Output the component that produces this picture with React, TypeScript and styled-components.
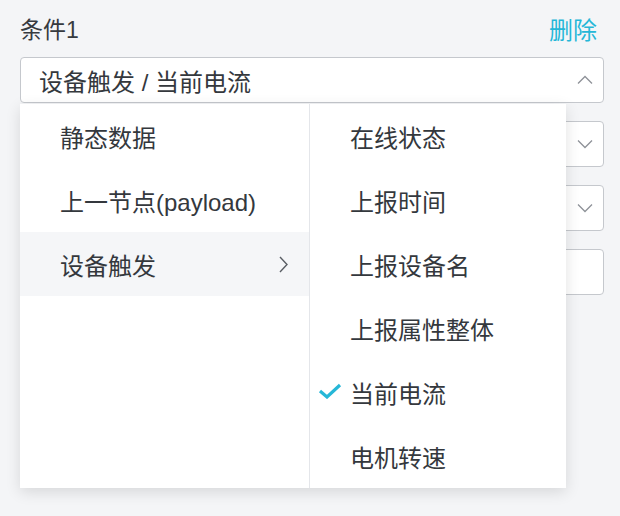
import React from 'react';
import styled, { createGlobalStyle } from 'styled-components';

const GlobalStyle = createGlobalStyle`
  html, body {
    margin: 0;
    padding: 0;
    background: #f4f5f7;
  }
  body {
    font-family: "Liberation Sans", "Noto Sans CJK SC", sans-serif;
    color: #363a3f;
  }
`;

const Page = styled.div`
  width: 620px;
  height: 516px;
  box-sizing: border-box;
  padding: 10px 16px 0 20px;
  background: #f4f5f7;
  overflow: hidden;
`;

const Header = styled.div`
  display: flex;
  justify-content: space-between;
  align-items: center;
  height: 36px;
  padding-right: 7px;
  margin-bottom: 11px;
`;

const Label = styled.span`
  font-size: 23px;
  color: #363a3f;
`;

const DeleteLink = styled.span`
  font-size: 24px;
  color: #26b7d7;
`;

const Fields = styled.div`
  display: flex;
  flex-direction: column;
  gap: 18px;
`;

const SelectWrap = styled.div`
  position: relative;
`;

const Field = styled.div`
  height: 46px;
  box-sizing: border-box;
  border: 1px solid #c5c8cd;
  border-radius: 4px;
  background: #fff;
  display: flex;
  align-items: center;
  justify-content: space-between;
  padding: 0 10px 0 18px;
  font-size: 24px;
  color: #34383d;
`;

const Arrow = styled.svg`
  width: 16px;
  height: 10px;
  flex: none;
`;

const Menu = styled.div`
  position: absolute;
  top: calc(100% + 1px);
  left: 0;
  width: 546px;
  display: flex;
  background: #fff;
  box-shadow: 0 4px 14px rgba(0, 0, 0, 0.12);
  z-index: 10;
`;

const Column = styled.div<{ $width: number; $divider?: boolean }>`
  width: ${(p) => p.$width}px;
  box-sizing: border-box;
  border-right: ${(p) => (p.$divider ? '1px solid #e4e6ea' : 'none')};
`;

const Item = styled.div<{ $hover?: boolean }>`
  position: relative;
  height: 64px;
  display: flex;
  align-items: center;
  justify-content: space-between;
  padding: 0 21px 0 40px;
  font-size: 24px;
  color: #34383d;
  background: ${(p) => (p.$hover ? '#f5f6f8' : 'transparent')};
`;

const Check = styled.svg`
  position: absolute;
  left: 8px;
  top: 50%;
  width: 24px;
  height: 16px;
  margin-top: -9px;
`;

const ChevronDown = ({ up }: { up?: boolean }) => (
  <Arrow viewBox="0 0 16 10">
    <path
      d={up ? 'M1 8.5 L8 1.5 L15 8.5' : 'M1 1.5 L8 8.5 L15 1.5'}
      fill="none"
      stroke="#8e9298"
      strokeWidth="1.3"
    />
  </Arrow>
);

const ChevronRight = () => (
  <svg width="9" height="17" viewBox="0 0 9 17">
    <path d="M1 1 L8 8.5 L1 16" fill="none" stroke="#5a5e64" strokeWidth="1.4" />
  </svg>
);

const firstLevel = ['静态数据', '上一节点(payload)', '设备触发'];
const secondLevel = ['在线状态', '上报时间', '上报设备名', '上报属性整体', '当前电流', '电机转速'];

export default function App() {
  return (
    <Page>
      <GlobalStyle />
      <Header>
        <Label>条件1</Label>
        <DeleteLink>删除</DeleteLink>
      </Header>
      <Fields>
        <SelectWrap>
          <Field>
            <span>设备触发 / 当前电流</span>
            <ChevronDown up />
          </Field>
          <Menu>
            <Column $width={290} $divider>
              {firstLevel.map((t) => (
                <Item key={t} $hover={t === '设备触发'}>
                  <span>{t}</span>
                  {t === '设备触发' && <ChevronRight />}
                </Item>
              ))}
            </Column>
            <Column $width={256}>
              {secondLevel.map((t) => (
                <Item key={t}>
                  {t === '当前电流' && (
                    <Check viewBox="0 0 24 16">
                      <path d="M2 8 L9 14 L22 2" fill="none" stroke="#26b7d7" strokeWidth="3.2" />
                    </Check>
                  )}
                  <span>{t}</span>
                </Item>
              ))}
            </Column>
          </Menu>
        </SelectWrap>
        <Field>
          <span />
          <ChevronDown />
        </Field>
        <Field>
          <span />
          <ChevronDown />
        </Field>
        <Field />
      </Fields>
    </Page>
  );
}
